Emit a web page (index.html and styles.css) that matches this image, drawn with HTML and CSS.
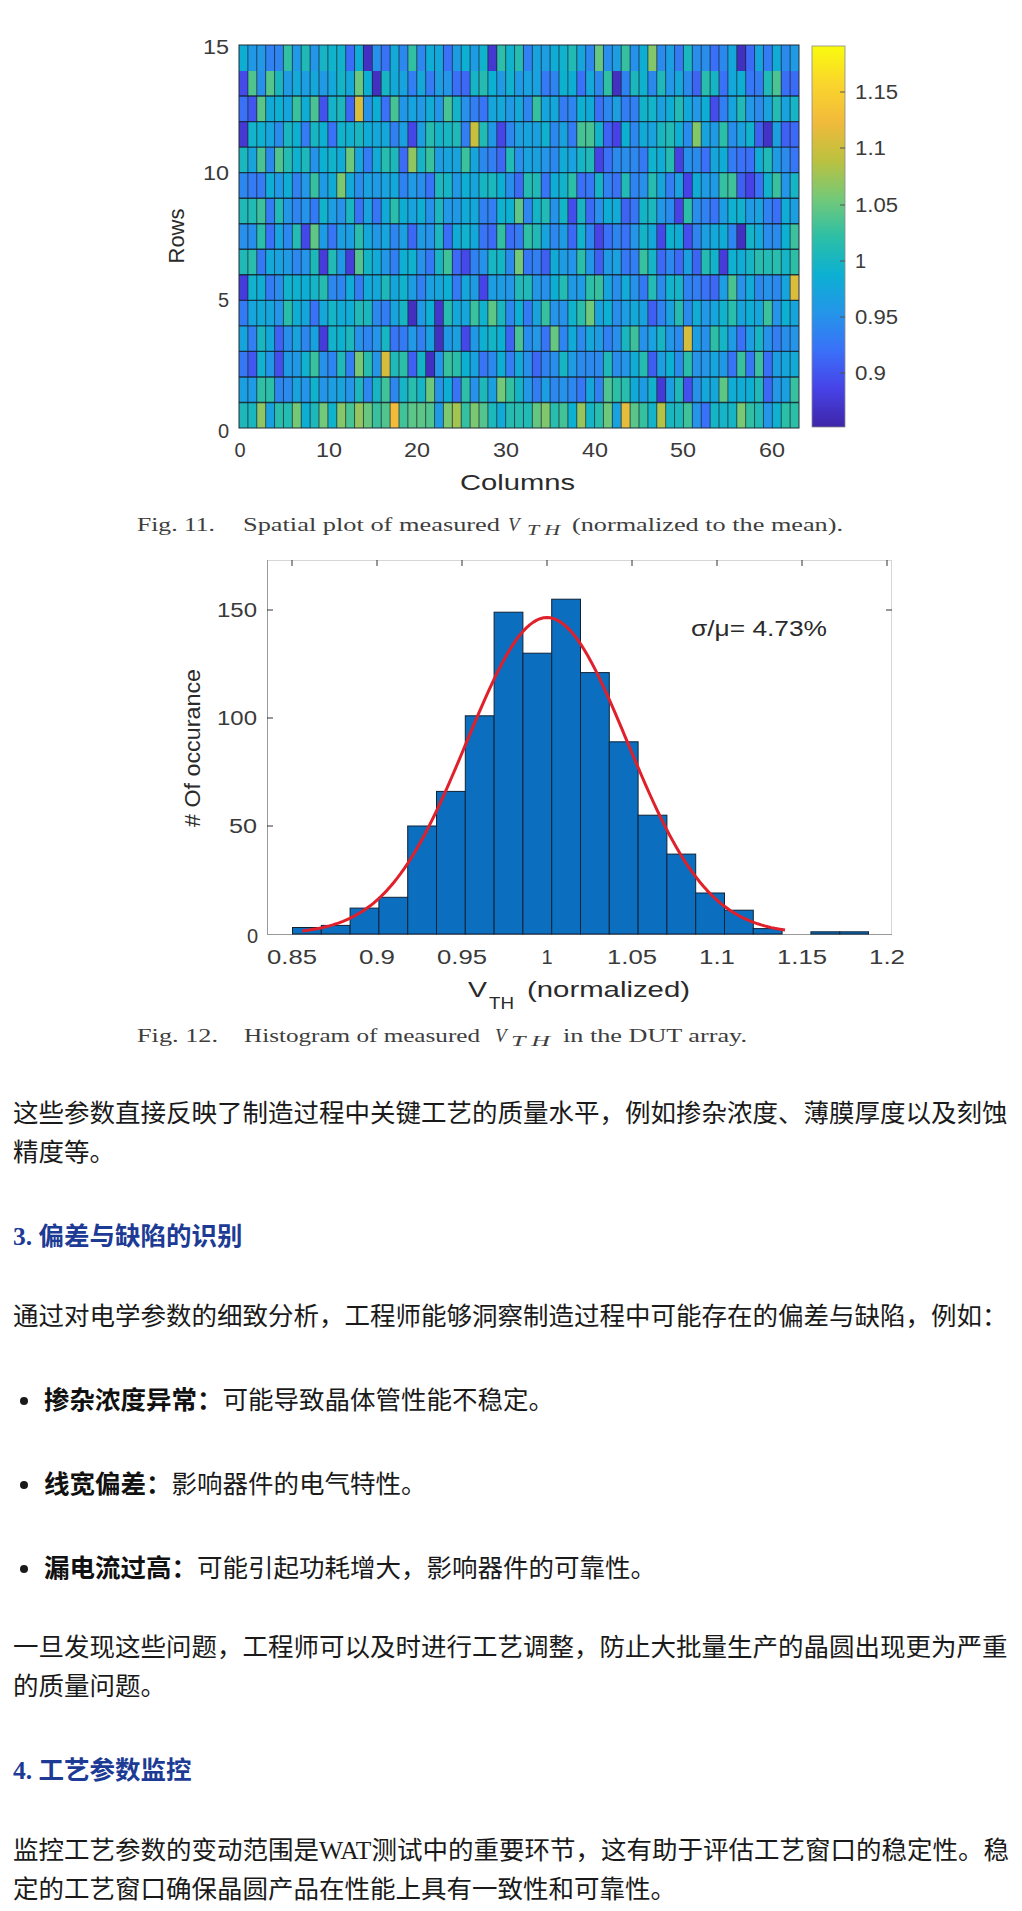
FILE: index.html
```html
<!DOCTYPE html>
<html lang="zh-CN">
<head>
<meta charset="utf-8">
<title>WAT测试</title>
<link rel="stylesheet" href="styles.css">
</head>
<body>
<article class="article">
  <figure class="fig">
    <svg class="plot" width="1022" height="545" viewBox="0 0 1022 545">
      <defs>
        <linearGradient id="parula" x1="0" y1="1" x2="0" y2="0">
          <stop offset="0" stop-color="#3e26a8"/>
          <stop offset="0.1" stop-color="#4742e7"/>
          <stop offset="0.2" stop-color="#3a70f8"/>
          <stop offset="0.3" stop-color="#2495e9"/>
          <stop offset="0.4" stop-color="#0cb0d2"/>
          <stop offset="0.5" stop-color="#2dbfa6"/>
          <stop offset="0.6" stop-color="#74c977"/>
          <stop offset="0.7" stop-color="#bcc13f"/>
          <stop offset="0.8" stop-color="#f1ba3b"/>
          <stop offset="0.9" stop-color="#fad52c"/>
          <stop offset="1" stop-color="#f9fb0e"/>
        </linearGradient>
      </defs>
      <g id="hm-cells" shape-rendering="crispEdges"></g>
      <g id="hm-lines"></g>
      <rect class="hm-frame" x="239" y="45" width="560" height="383"/>

      <rect class="cbar" x="812" y="46" width="33" height="381" fill="url(#parula)"/>
      <g class="cbar-ticks">
        <line x1="840" y1="92" x2="845" y2="92"/>
        <line x1="840" y1="148" x2="845" y2="148"/>
        <line x1="840" y1="205" x2="845" y2="205"/>
        <line x1="840" y1="261" x2="845" y2="261"/>
        <line x1="840" y1="317" x2="845" y2="317"/>
        <line x1="840" y1="373" x2="845" y2="373"/>
      </g>
      <g class="ax">
        <text x="855" y="99" textLength="43" lengthAdjust="spacingAndGlyphs">1.15</text>
        <text x="855" y="155" textLength="31" lengthAdjust="spacingAndGlyphs">1.1</text>
        <text x="855" y="212" textLength="43" lengthAdjust="spacingAndGlyphs">1.05</text>
        <text x="855" y="268">1</text>
        <text x="855" y="324" textLength="43" lengthAdjust="spacingAndGlyphs">0.95</text>
        <text x="855" y="380" textLength="31" lengthAdjust="spacingAndGlyphs">0.9</text>

        <text class="end" x="229" y="54" textLength="26" lengthAdjust="spacingAndGlyphs">15</text>
        <text class="end" x="229" y="180" textLength="26" lengthAdjust="spacingAndGlyphs">10</text>
        <text class="end" x="229" y="307">5</text>
        <text class="end" x="229" y="438">0</text>

        <text class="mid" x="240" y="457">0</text>
        <text class="mid" x="329" y="457" textLength="26" lengthAdjust="spacingAndGlyphs">10</text>
        <text class="mid" x="417" y="457" textLength="26" lengthAdjust="spacingAndGlyphs">20</text>
        <text class="mid" x="506" y="457" textLength="26" lengthAdjust="spacingAndGlyphs">30</text>
        <text class="mid" x="595" y="457" textLength="26" lengthAdjust="spacingAndGlyphs">40</text>
        <text class="mid" x="683" y="457" textLength="26" lengthAdjust="spacingAndGlyphs">50</text>
        <text class="mid" x="772" y="457" textLength="26" lengthAdjust="spacingAndGlyphs">60</text>

        <text class="label" x="460" y="490" textLength="115" lengthAdjust="spacingAndGlyphs">Columns</text>
        <text class="label" transform="translate(183.5,263.5) rotate(-90)" x="0" y="0" textLength="55" lengthAdjust="spacingAndGlyphs">Rows</text>
      </g>
      <g class="cap">
        <text x="137" y="531" textLength="78" lengthAdjust="spacingAndGlyphs">Fig. 11.</text>
        <text x="243" y="531" textLength="257" lengthAdjust="spacingAndGlyphs">Spatial plot of measured</text>
        <text class="it" x="508" y="531">V</text>
        <text class="it sub" x="527" y="535" textLength="33" lengthAdjust="spacingAndGlyphs">T H</text>
        <text x="572" y="531" textLength="271" lengthAdjust="spacingAndGlyphs">(normalized to the mean).</text>
      </g>
    </svg>
  </figure>

  <figure class="fig">
    <svg class="plot" width="1022" height="511" viewBox="0 545 1022 511">
      <g class="hist-frame">
        <line class="faint" x1="267" y1="560.5" x2="892" y2="560.5"/>
        <line class="faint" x1="891.5" y1="560" x2="891.5" y2="934"/>
        <line x1="267.5" y1="560" x2="267.5" y2="934"/>
        <line x1="267" y1="934.5" x2="892" y2="934.5"/>
      </g>
      <g class="hist-ticks">
        <line x1="292" y1="560" x2="292" y2="566"/>
        <line x1="377" y1="560" x2="377" y2="566"/>
        <line x1="462" y1="560" x2="462" y2="566"/>
        <line x1="547" y1="560" x2="547" y2="566"/>
        <line x1="632" y1="560" x2="632" y2="566"/>
        <line x1="717" y1="560" x2="717" y2="566"/>
        <line x1="802" y1="560" x2="802" y2="566"/>
        <line x1="887" y1="560" x2="887" y2="566"/>
        <line x1="267" y1="610" x2="273" y2="610"/>
        <line x1="267" y1="718" x2="273" y2="718"/>
        <line x1="267" y1="826" x2="273" y2="826"/>
        <line x1="886" y1="610" x2="892" y2="610"/>
      </g>
      <g class="bars">
        <rect x="292.5" y="927.5" width="28.8" height="6.5"/>
        <rect x="321.3" y="925.4" width="28.8" height="8.6"/>
        <rect x="350.1" y="908.1" width="28.8" height="25.9"/>
        <rect x="378.9" y="897.3" width="28.8" height="36.7"/>
        <rect x="407.7" y="826" width="28.8" height="108"/>
        <rect x="436.5" y="791.4" width="28.8" height="142.6"/>
        <rect x="465.3" y="715.8" width="28.8" height="218.2"/>
        <rect x="494.1" y="612.2" width="28.8" height="321.8"/>
        <rect x="522.9" y="653.2" width="28.8" height="280.8"/>
        <rect x="551.7" y="599.2" width="28.8" height="334.8"/>
        <rect x="580.5" y="672.6" width="28.8" height="261.4"/>
        <rect x="609.3" y="741.8" width="28.8" height="192.2"/>
        <rect x="638.1" y="815.2" width="28.8" height="118.8"/>
        <rect x="666.9" y="854.1" width="28.8" height="79.9"/>
        <rect x="695.7" y="893" width="28.8" height="41"/>
        <rect x="724.5" y="910.2" width="28.8" height="23.8"/>
        <rect x="753.3" y="928.6" width="28.8" height="5.4"/>
        <rect x="810.9" y="931.8" width="28.8" height="2.2"/>
        <rect x="839.7" y="931.8" width="28.8" height="2.2"/>
      </g>
      <polyline id="fit" class="fit" points=""/>
      <g class="ax">
        <text class="end" x="257" y="617" textLength="40" lengthAdjust="spacingAndGlyphs">150</text>
        <text class="end" x="257" y="725" textLength="40" lengthAdjust="spacingAndGlyphs">100</text>
        <text class="end" x="257" y="833" textLength="28" lengthAdjust="spacingAndGlyphs">50</text>
        <text class="end" x="258" y="943">0</text>

        <text class="mid" x="292" y="964" textLength="50" lengthAdjust="spacingAndGlyphs">0.85</text>
        <text class="mid" x="377" y="964" textLength="36" lengthAdjust="spacingAndGlyphs">0.9</text>
        <text class="mid" x="462" y="964" textLength="50" lengthAdjust="spacingAndGlyphs">0.95</text>
        <text class="mid" x="547" y="964">1</text>
        <text class="mid" x="632" y="964" textLength="50" lengthAdjust="spacingAndGlyphs">1.05</text>
        <text class="mid" x="717" y="964" textLength="36" lengthAdjust="spacingAndGlyphs">1.1</text>
        <text class="mid" x="802" y="964" textLength="50" lengthAdjust="spacingAndGlyphs">1.15</text>
        <text class="mid" x="887" y="964" textLength="36" lengthAdjust="spacingAndGlyphs">1.2</text>

        <text class="label" x="468" y="997" textLength="19" lengthAdjust="spacingAndGlyphs">V</text>
        <text class="label sub" x="489" y="1009" textLength="25" lengthAdjust="spacingAndGlyphs">TH</text>
        <text class="label" x="527" y="997" textLength="163" lengthAdjust="spacingAndGlyphs">(normalized)</text>

        <text class="label" x="691" y="636" textLength="136" lengthAdjust="spacingAndGlyphs">σ/μ= 4.73%</text>
        <text class="label" transform="translate(199.5,827) rotate(-90)" x="0" y="0" textLength="158" lengthAdjust="spacingAndGlyphs"># Of occurance</text>
      </g>
      <g class="cap">
        <text x="137" y="1042" textLength="81" lengthAdjust="spacingAndGlyphs">Fig. 12.</text>
        <text x="244" y="1042" textLength="236" lengthAdjust="spacingAndGlyphs">Histogram of measured</text>
        <text class="it" x="495" y="1042">V</text>
        <text class="it sub" x="511" y="1046" textLength="39" lengthAdjust="spacingAndGlyphs">T H</text>
        <text x="563" y="1042" textLength="184" lengthAdjust="spacingAndGlyphs">in the DUT array.</text>
      </g>
    </svg>
  </figure>

  <div class="content">
    <p>这些参数直接反映了制造过程中关键工艺的质量水平，例如掺杂浓度、薄膜厚度以及刻蚀精度等。</p>
    <h3 class="sec">3. 偏差与缺陷的识别</h3>
    <p>通过对电学参数的细致分析，工程师能够洞察制造过程中可能存在的偏差与缺陷，例如：</p>
    <ul class="bullets">
      <li><span><strong>掺杂浓度异常：</strong>可能导致晶体管性能不稳定。</span></li>
      <li><span><strong>线宽偏差：</strong>影响器件的电气特性。</span></li>
      <li><span><strong>漏电流过高：</strong>可能引起功耗增大，影响器件的可靠性。</span></li>
    </ul>
    <p>一旦发现这些问题，工程师可以及时进行工艺调整，防止大批量生产的晶圆出现更为严重的质量问题。</p>
    <h3 class="sec">4. 工艺参数监控</h3>
    <p>监控工艺参数的变动范围是WAT测试中的重要环节，这有助于评估工艺窗口的稳定性。稳定的工艺窗口确保晶圆产品在性能上具有一致性和可靠性。</p>
  </div>
</article>
<script src="script.js"></script>
</body>
</html>
```

FILE: styles.css
```css
html, body {
  margin: 0;
  padding: 0;
  background: #ffffff;
}

body {
  width: 1022px;
  overflow: hidden;
}

.article {
  width: 1022px;
}

.fig {
  margin: 0;
}

.plot {
  display: block;
}

/* chart text */
.ax text {
  font-family: "Liberation Sans", Arial, sans-serif;
  font-size: 20px;
  fill: #3a3a3a;
}

.ax .end {
  text-anchor: end;
}

.ax .mid {
  text-anchor: middle;
}

.ax .label {
  font-size: 22px;
  fill: #2a2a2a;
}

.ax .sub {
  font-size: 16px;
}

.cap text {
  font-family: "Liberation Serif", "Times New Roman", serif;
  font-size: 19px;
  fill: #3e3e3e;
}

.cap .it {
  font-style: italic;
}

.cap .sub {
  font-size: 14px;
}

/* heatmap */
.hm-v {
  stroke: #17222c;
  stroke-width: 0.9;
  stroke-opacity: 0.8;
}

.hm-h {
  stroke: #15202a;
  stroke-width: 1.4;
  stroke-opacity: 0.85;
}

.hm-frame {
  fill: none;
  stroke: #1d2a36;
  stroke-width: 1;
}

.cbar {
  stroke: #8a8a8a;
  stroke-width: 0.8;
}

.cbar-ticks line {
  stroke: #555555;
  stroke-width: 1;
}

/* histogram */
.hist-frame line {
  stroke: #9a9a9a;
  stroke-width: 1;
}

.hist-frame .faint {
  stroke: #d6d6d6;
}

.hist-ticks line {
  stroke: #333333;
  stroke-width: 1;
}

.bars rect {
  fill: #0b6ebf;
  stroke: #0e2338;
  stroke-width: 1;
}

.fit {
  fill: none;
  stroke: #e0202a;
  stroke-width: 3;
  stroke-linejoin: round;
}

/* article text */
.content {
  padding: 38px 5px 0 13px;
  font-family: "Liberation Serif", "Noto Sans CJK SC", serif;
  font-size: 25.5px;
  line-height: 39px;
  color: #1a1a1a;
}

.content p {
  margin: 0 0 45px;
}

.sec {
  margin: 0 0 41px;
  font-size: 25.5px;
  line-height: 39px;
  font-weight: 700;
  color: #1d3b95;
}

.bullets {
  list-style: none;
  margin: 0 0 40px;
  padding: 0;
}

.bullets li {
  display: flex;
  align-items: center;
  margin: 0 0 45px;
}

.bullets li:last-child {
  margin-bottom: 0;
}

.bullets li::before {
  content: "";
  flex: none;
  width: 8px;
  height: 8px;
  border-radius: 50%;
  background: #1a1a1a;
  margin: 0 16px 0 7px;
}

.bullets strong {
  font-weight: 700;
  color: #111111;
}
```

FILE: script.js
```js
(function () {
  var NS = 'http://www.w3.org/2000/svg';

  function el(name, attrs, parent) {
    var e = document.createElementNS(NS, name);
    for (var k in attrs) e.setAttribute(k, attrs[k]);
    parent.appendChild(e);
    return e;
  }

  var seed = 20240611;
  function rnd() {
    seed = (seed * 16807) % 2147483647;
    return (seed - 1) / 2147483646;
  }
  function gauss() {
    var u = rnd() || 1e-9, v = rnd();
    return Math.sqrt(-2 * Math.log(u)) * Math.cos(2 * Math.PI * v);
  }

  var stops = [
    [0, '#3e26a8'], [0.1, '#4742e7'], [0.2, '#3a70f8'], [0.3, '#2495e9'],
    [0.4, '#0cb0d2'], [0.5, '#2dbfa6'], [0.6, '#74c977'], [0.7, '#bcc13f'],
    [0.8, '#f1ba3b'], [0.9, '#fad52c'], [1, '#f9fb0e']
  ];
  function rgb(h) {
    return [parseInt(h.substr(1, 2), 16), parseInt(h.substr(3, 2), 16), parseInt(h.substr(5, 2), 16)];
  }
  function color(t) {
    for (var i = 0; i < stops.length - 1; i++) {
      if (t <= stops[i + 1][0]) {
        var a = rgb(stops[i][1]), b = rgb(stops[i + 1][1]);
        var f = (t - stops[i][0]) / (stops[i + 1][0] - stops[i][0]);
        return 'rgb(' + Math.round(a[0] + (b[0] - a[0]) * f) + ',' +
          Math.round(a[1] + (b[1] - a[1]) * f) + ',' +
          Math.round(a[2] + (b[2] - a[2]) * f) + ')';
      }
    }
    return stops[stops.length - 1][1];
  }

  var cells = document.getElementById('hm-cells');
  var lines = document.getElementById('hm-lines');
  var x0 = 239, y0 = 45, W = 560, H = 383, NC = 63, NR = 15;
  var cw = W / NC, rh = H / NR;
  var r, c;
  for (r = 0; r < NR; r++) {
    for (c = 0; c < NC; c++) {
      var t = 0.35 + 0.1 * gauss();
      if (r === NR - 1) t += 0.17;
      var o = rnd();
      if (o < 0.04) t -= 0.17;
      else if (o > 0.975) t += 0.24;
      t = Math.max(0.04, Math.min(0.97, t));
      el('rect', {
        x: (x0 + c * cw).toFixed(2),
        y: (y0 + r * rh).toFixed(2),
        width: (cw + 0.4).toFixed(2),
        height: (rh + 0.4).toFixed(2),
        fill: color(t)
      }, cells);
    }
  }
  for (c = 1; c < NC; c++) {
    var x = (x0 + c * cw).toFixed(2);
    el('line', { x1: x, y1: y0, x2: x, y2: y0 + H, 'class': 'hm-v' }, lines);
  }
  for (r = 2; r < NR; r++) {
    var y = (y0 + r * rh).toFixed(2);
    el('line', { x1: x0, y1: y, x2: x0 + W, y2: y, 'class': 'hm-h' }, lines);
  }

  var pts = [];
  for (var v = 0.856; v <= 1.1416; v += 0.002) {
    var px = 547 + (v - 1) * 1700;
    var py = 934 - 146.5 * 2.16 * Math.exp(-Math.pow(v - 1, 2) / (2 * 0.0473 * 0.0473));
    pts.push(px.toFixed(1) + ',' + py.toFixed(1));
  }
  document.getElementById('fit').setAttribute('points', pts.join(' '));
})();
```
